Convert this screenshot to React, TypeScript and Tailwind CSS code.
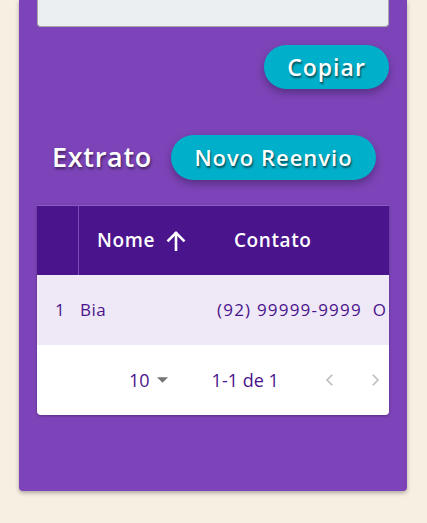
import React from "react";

const font = { fontFamily: '"Open Sans", "DejaVu Sans", sans-serif' };

function ArrowUp() {
  return (
    <svg width="26" height="26" viewBox="0 0 24 24" fill="none" stroke="white" strokeWidth="2.4" strokeLinecap="square">
      <path d="M12 20V5" />
      <path d="M5 11.5l7-7 7 7" />
    </svg>
  );
}

function Chevron({ dir }: { dir: "left" | "right" }) {
  return (
    <svg width="18" height="18" viewBox="0 0 24 24" fill="none" stroke="#bdbdbd" strokeWidth="2.2">
      {dir === "left" ? <path d="M15 5l-7 7 7 7" /> : <path d="M9 5l7 7-7 7" />}
    </svg>
  );
}

export default function App() {
  return (
    <div className="w-[427px] h-[523px] bg-[#f7efe2] overflow-hidden" style={font}>
      <div className="ml-[19px] w-[388px] h-[491px] bg-[#7d44b9] rounded-b-[4px] shadow-[0_2px_4px_rgba(0,0,0,0.3)] px-[18px] flex flex-col">
        <div className="h-[27px] bg-[#eceff1] border-x border-b border-[#a9a9a9] rounded-b-[4px]" />
        <div className="flex justify-end mt-[18px]">
          <button className="w-[125px] h-[44px] rounded-full bg-[#00afc9] text-white text-[23px] tracking-[1px] font-semibold shadow-[0_4px_8px_rgba(0,0,0,0.3)] [text-shadow:1px_2px_2px_rgba(0,0,0,0.55)]">
            Copiar
          </button>
        </div>
        <div className="flex items-center mt-[46px] pl-[15px]">
          <span className="text-white text-[27px] tracking-[0.7px] font-semibold [text-shadow:1px_2px_3px_rgba(0,0,0,0.5)]">Extrato</span>
          <button className="ml-[19px] w-[205px] h-[45px] rounded-full bg-[#00afc9] text-white text-[22px] tracking-[1px] font-semibold shadow-[0_4px_8px_rgba(0,0,0,0.3)] [text-shadow:1px_2px_2px_rgba(0,0,0,0.55)]">
            Novo Reenvio
          </button>
        </div>
        <div className="mt-[25px] w-[352px] rounded-b-[4px] overflow-hidden shadow-[0_1px_3px_rgba(0,0,0,0.3)]">
          <div className="h-[70px] bg-[#4a148c] flex items-stretch border-t border-[#8a5bc4]">
            <div className="w-[42px] border-r border-[#7a4cb6]" />
            <div className="flex items-center pl-[18px] text-white text-[19px] tracking-[0.6px] font-semibold">
              <span>Nome</span>
              <span className="ml-[8px] mt-[1px]"><ArrowUp /></span>
              <span className="ml-[45px]">Contato</span>
            </div>
          </div>
          <div className="h-[70px] bg-[#efe8f6] flex items-center text-[#4a148c] text-[17px] font-medium whitespace-nowrap overflow-hidden">
            <span className="w-[42px] pl-[18px] shrink-0">1</span>
            <span className="w-[138px] pl-[1px] shrink-0 tracking-[0.5px]">Bia</span>
            <span className="shrink-0 tracking-[1.2px]">(92) 99999-9999</span>
            <span className="ml-[11px] shrink-0">O</span>
          </div>
          <div className="h-[70px] bg-white flex items-center text-[#4a148c] text-[18px]">
            <span className="ml-[92px]">10</span>
            <svg className="ml-[7px]" width="11" height="6" viewBox="0 0 10 5"><path d="M0 0h10L5 5z" fill="#757575" /></svg>
            <span className="ml-[44px]">1-1 de 1</span>
            <span className="ml-[42px]"><Chevron dir="left" /></span>
            <span className="ml-[27px]"><Chevron dir="right" /></span>
          </div>
        </div>
      </div>
    </div>
  );
}
